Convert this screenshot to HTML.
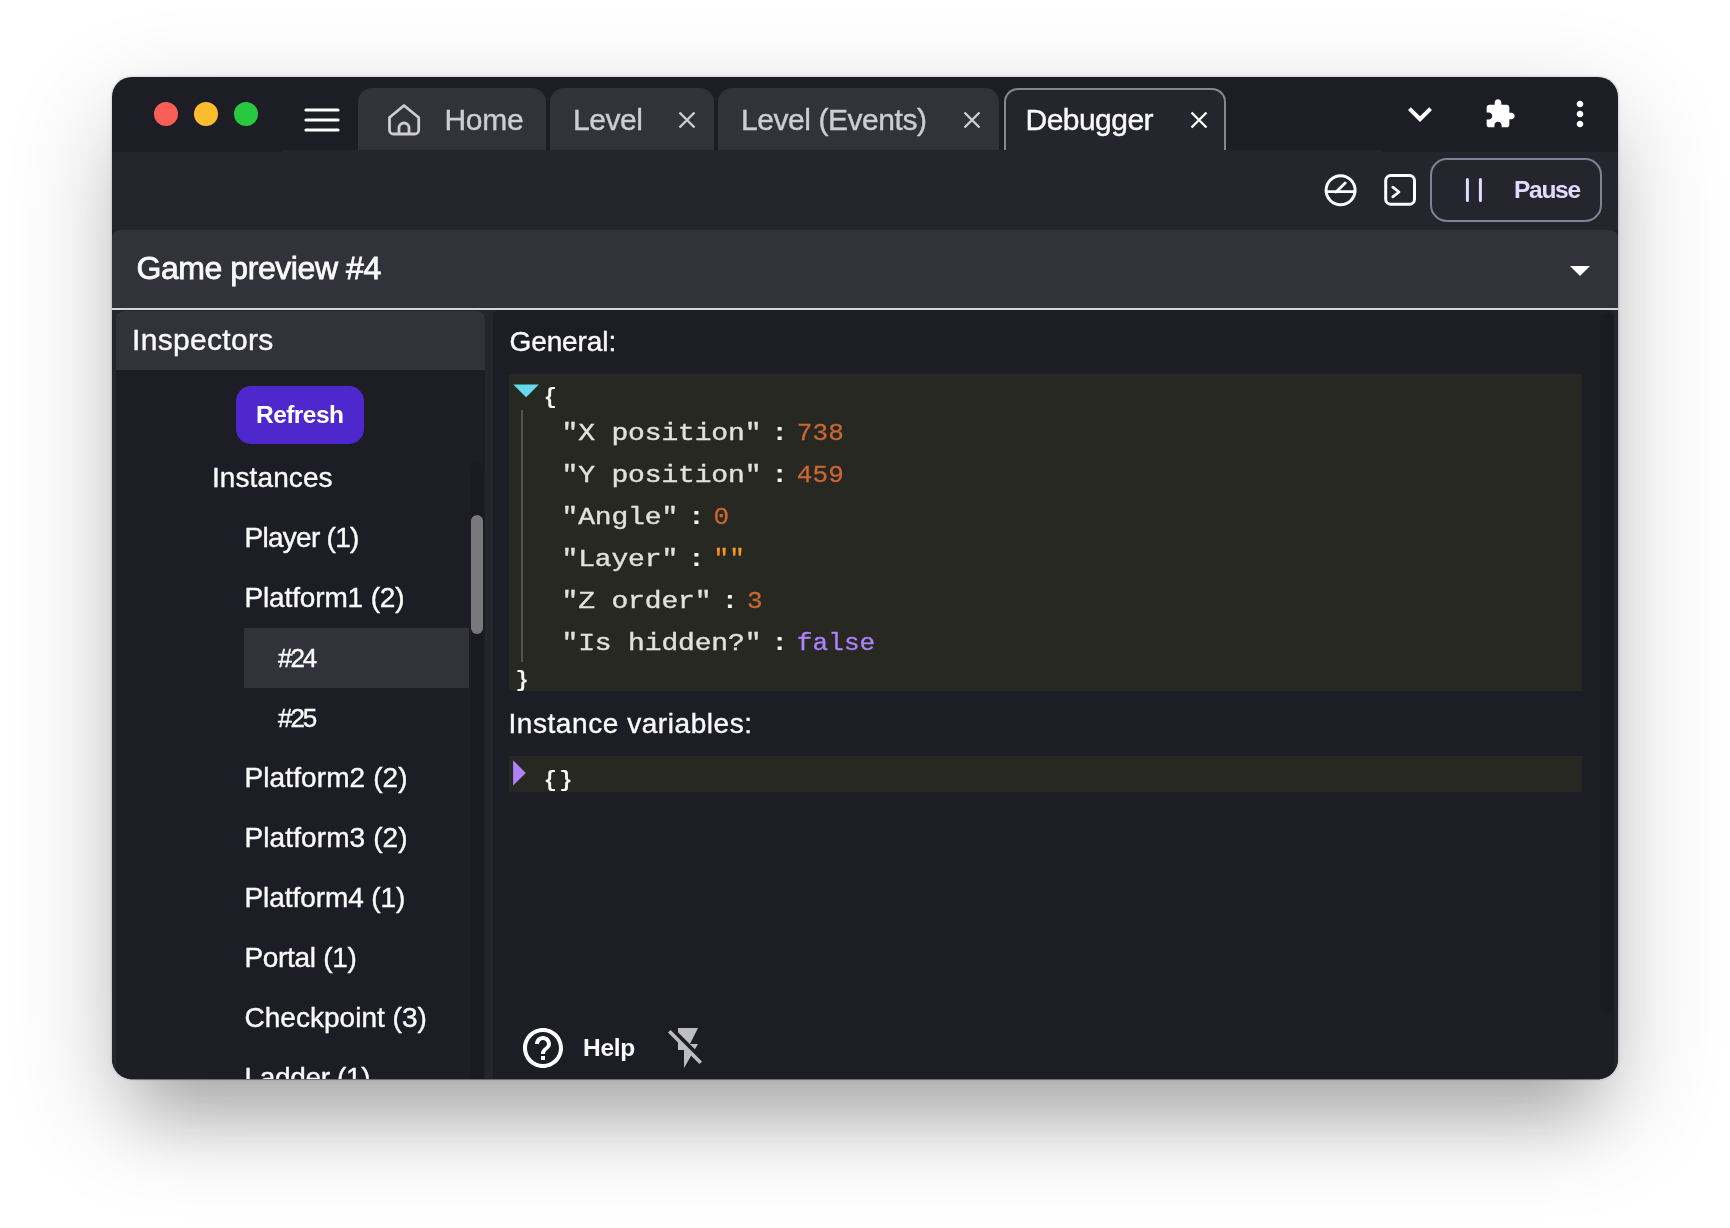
<!DOCTYPE html>
<html lang="en"><head><meta charset="utf-8"><title>GDevelop Debugger</title>
<style>
html,body{margin:0;padding:0}
body{width:1730px;height:1228px;background:#fff;position:relative;overflow:hidden}
.shadow{position:absolute;left:112px;top:77px;width:1506px;height:1002px;border-radius:20px;background:#1d1d26;box-shadow:0 36px 104px rgba(0,0,0,.22),0 64px 64px -30px rgba(0,0,0,.19),0 0 3px rgba(0,0,0,.25)}
.clip{will-change:transform;position:absolute;left:0;top:0;width:1730px;height:1228px;clip-path:inset(77px 112px 149px 112px round 20px)}
.a{position:absolute}
.t{position:absolute;white-space:pre}
.m{position:absolute;white-space:pre;font:400 28px/1 "Liberation Mono",monospace;transform-origin:0 76%}
.k{-webkit-text-stroke:.45px #e2e2dc;color:#e2e2dc;transform:scaleY(.84);letter-spacing:-.15px}
.c{color:#f4f4ee;transform:scaleY(.84);font-weight:700}
.v{-webkit-text-stroke:.3px;font-size:26px;letter-spacing:.1px;transform:scaleY(.93)}
.n{color:#cc6633}
.s{color:#fd971f}
.b{color:#ae81ff}
.br{font-weight:700;font-size:22px;color:#f9f8f5}
.tab{position:absolute;top:88px;height:62px;background:#32323b;border-radius:14px 14px 0 0}
.dot{position:absolute;top:102px;width:24px;height:24px;border-radius:50%}
svg{position:absolute;overflow:visible}

</style></head>
<body>
<div class="shadow"></div>
<div class="a" style="left:130px;top:1079px;width:1470px;height:1px;background:rgba(29,29,38,.4)"></div>
<div class="clip">
<!-- toolbar + tab strip -->
<div class="a" style="left:112px;top:152px;width:1506px;height:78px;background:#25252e"></div>
<div class="a" style="left:282px;top:150px;width:1100px;height:2px;background:#25252e"></div>
<!-- traffic lights -->
<div class="dot" style="left:154px;background:#fa5f57"></div>
<div class="dot" style="left:194px;background:#fdbc2e"></div>
<div class="dot" style="left:234px;background:#28c840"></div>
<!-- hamburger -->
<svg style="left:300px;top:100px" width="44" height="40" viewBox="300 100 44 40"><path d="M306 110H338M306 120H338M306 130H338" stroke="#fff" stroke-width="3.2" stroke-linecap="round" fill="none"/></svg>
<!-- tabs -->
<div class="tab" style="left:358px;width:188px"></div>
<div class="tab" style="left:550px;width:164px"></div>
<div class="tab" style="left:718px;width:281px"></div>
<div class="tab" style="left:1004px;width:218px;height:60px;background:#25252e;border:2px solid #86868e;border-bottom:0"></div>
<!-- home icon -->
<svg style="left:384px;top:100px" width="40" height="40" viewBox="384 100 40 40"><path d="M389.5 117.5L404 105.5L418.7 117.5V130a4 4 0 0 1-4 4H393.5a4 4 0 0 1-4-4Z" stroke="#cdcdd2" stroke-width="2.8" stroke-linejoin="round" fill="none"/><path d="M399 133.5V128a5 5 0 0 1 10 0V133.5" stroke="#cdcdd2" stroke-width="2.8" fill="none"/></svg>
<!-- close X -->
<svg style="left:677px;top:110px" width="20" height="20" viewBox="0 0 20 20"><path d="M2.5 2.5L17.5 17.5M17.5 2.5L2.5 17.5" stroke="#cdcdd2" stroke-width="2.4" fill="none"/></svg>
<svg style="left:962.4px;top:110px" width="20" height="20" viewBox="0 0 20 20"><path d="M2.5 2.5L17.5 17.5M17.5 2.5L2.5 17.5" stroke="#cdcdd2" stroke-width="2.4" fill="none"/></svg>
<svg style="left:1189.2px;top:110px" width="20" height="20" viewBox="0 0 20 20"><path d="M2.5 2.5L17.5 17.5M17.5 2.5L2.5 17.5" stroke="#fafafa" stroke-width="2.4" fill="none"/></svg>
<!-- right icons -->
<svg style="left:1396px;top:90px" width="48" height="48" viewBox="0 0 24 24"><path d="M16.59 8.59L12 13.17 7.41 8.59 6 10l6 6 6-6z" fill="#fff"/></svg>
<svg style="left:1484.2px;top:97.8px" width="32" height="32" viewBox="0 0 24 24"><path d="M20.5 11H19V7c0-1.1-.9-2-2-2h-4V3.500C13 2.120 11.880 1 10.500 1S8 2.120 8 3.500V5H4c-1.100 0-1.990.9-1.990 2v3.800H3.500c1.490 0 2.700 1.210 2.700 2.700s-1.210 2.700-2.700 2.700H2V20c0 1.100.9 2 2 2h3.800v-1.500c0-1.490 1.210-2.700 2.700-2.700 1.490 0 2.700 1.210 2.700 2.700V22H17c1.100 0 2-.9 2-2v-4h1.500c1.380 0 2.500-1.120 2.500-2.500S21.880 11 20.500 11z" fill="#fff"/></svg>
<svg style="left:1560px;top:94px" width="40" height="40" viewBox="0 0 24 24"><path d="M12 8c1.100 0 2-.9 2-2s-.9-2-2-2-2 .9-2 2 .9 2 2 2zm0 2c-1.100 0-2 .9-2 2s.9 2 2 2 2-.9 2-2-.9-2-2-2zm0 6c-1.100 0-2 .9-2 2s.9 2 2 2 2-.9 2-2-.9-2-2-2z" fill="#fff"/></svg>
<!-- toolbar icons -->
<svg style="left:1320px;top:170px" width="42" height="42" viewBox="1320 170 42 42"><circle cx="1340.6" cy="190.2" r="14.5" stroke="#fff" stroke-width="3" fill="none"/><path d="M1326.5 191.6H1354.7M1336 192L1345.2 183" stroke="#fff" stroke-width="2.8" fill="none" stroke-linecap="round"/></svg>
<svg style="left:1380px;top:170px" width="42" height="42" viewBox="1380 170 42 42"><rect x="1385.7" y="175.5" width="28.8" height="28.7" rx="5" stroke="#fff" stroke-width="3" fill="none"/><path d="M1392.8 187.2L1399 192L1392.8 196.8" stroke="#fff" stroke-width="2.8" fill="none" stroke-linecap="round" stroke-linejoin="round"/></svg>
<div class="a" style="left:1430px;top:158.3px;width:168px;height:59.3px;border:2px solid #84809a;border-radius:17px"></div>
<svg style="left:1460px;top:172px" width="30" height="36" viewBox="1460 172 30 36"><path d="M1467.4 179.5V200.5M1480.4 179.5V200.5" stroke="#e4daff" stroke-width="3" stroke-linecap="round" fill="none"/></svg>
<!-- game preview header -->
<div class="a" style="left:112px;top:230px;width:1506px;height:78px;background:#32323b;border-radius:8px 8px 0 0"></div>
<div class="a" style="left:112px;top:308px;width:1506px;height:2px;background:#d6d6da"></div>
<svg style="left:1556px;top:246px" width="48" height="48" viewBox="0 0 24 24"><path d="M7 10l5 5 5-5z" fill="#fff"/></svg>
<!-- body -->
<div class="a" style="left:112px;top:310px;width:1506px;height:780px;background:#25252e"></div>
<div class="a" style="left:116px;top:310.5px;width:369px;height:780px;background:#1d1d26;border-radius:8px 8px 0 0"></div>
<div class="a" style="left:116px;top:310.5px;width:369px;height:59.7px;background:#32323b;border-radius:8px 8px 0 0"></div>
<div class="a" style="left:493.4px;top:310px;width:1120.6px;height:780px;background:#1d1d26;border-radius:6px 6px 0 0"></div>
<div class="a" style="left:1600px;top:314px;width:14px;height:698px;background:rgba(0,0,0,.07);border-radius:6px"></div>
<!-- left panel -->
<div class="a" style="left:236px;top:386px;width:128px;height:58px;background:#4f28cd;border-radius:15px"></div>
<div class="a" style="left:471px;top:462px;width:12px;height:640px;background:rgba(0,0,0,.1);border-radius:6px 6px 0 0"></div>
<div class="a" style="left:244px;top:628px;width:225px;height:60px;background:#32323b"></div>
<div class="a" style="left:471px;top:515px;width:12px;height:119px;background:#79797d;border-radius:6px"></div>
<!-- json boxes -->
<div class="a" style="left:509px;top:374px;width:1073px;height:317.4px;background:#272822"></div>
<div class="a" style="left:509px;top:756px;width:1073px;height:35.5px;background:#272822"></div>
<svg style="left:509px;top:380px" width="40" height="24" viewBox="509 380 40 24"><path d="M513.3 384.4H538.9L526.1 397.3Z" fill="#66d9ef"/></svg>
<svg style="left:509px;top:756px" width="24" height="34" viewBox="509 756 24 34"><path d="M513.1 760.3V785.5L525.8 772.9Z" fill="#ae81ff"/></svg>
<div class="a" style="left:521px;top:410px;width:2px;height:251.5px;background:#55544a"></div>
<div class="m br" id="b_open" style="left:543.8px;top:387px">{</div>
<div class="m br" id="b_close" style="left:515.6px;top:669.6px">}</div>
<div class="m br" id="b_empty" style="left:543.8px;top:770px;letter-spacing:2.2px">{}</div>
<div class="m k" id="k0" style="left:561.5px;top:418.72px">&quot;X position&quot;</div>
<div class="m c" id="c0" style="left:771.3px;top:418.72px">:</div>
<div class="m v n" id="v0" style="left:796.8px;top:420.24px">738</div>
<div class="m k" id="k1" style="left:561.5px;top:460.72px">&quot;Y position&quot;</div>
<div class="m c" id="c1" style="left:771.3px;top:460.72px">:</div>
<div class="m v n" id="v1" style="left:796.8px;top:462.24px">459</div>
<div class="m k" id="k2" style="left:561.5px;top:502.72px">&quot;Angle&quot;</div>
<div class="m c" id="c2" style="left:688.0px;top:502.72px">:</div>
<div class="m v n" id="v2" style="left:713.5px;top:504.24px">0</div>
<div class="m k" id="k3" style="left:561.5px;top:544.72px">&quot;Layer&quot;</div>
<div class="m c" id="c3" style="left:688.0px;top:544.72px">:</div>
<div class="m v s" id="v3" style="left:713.5px;top:546.24px">&quot;&quot;</div>
<div class="m k" id="k4" style="left:561.5px;top:586.72px">&quot;Z order&quot;</div>
<div class="m c" id="c4" style="left:721.4px;top:586.72px">:</div>
<div class="m v n" id="v4" style="left:746.9px;top:588.24px">3</div>
<div class="m k" id="k5" style="left:561.5px;top:628.72px">&quot;Is hidden?&quot;</div>
<div class="m c" id="c5" style="left:771.3px;top:628.72px">:</div>
<div class="m v b" id="v5" style="left:796.8px;top:630.24px">false</div>
<!-- help -->
<svg style="left:519px;top:1024px" width="48" height="48" viewBox="0 0 24 24"><path d="M11 18h2v-2h-2v2zm1-16C6.480 2 2 6.480 2 12s4.480 10 10 10 10-4.480 10-10S17.520 2 12 2zm0 18c-4.410 0-8-3.590-8-8s3.590-8 8-8 8 3.590 8 8-3.590 8-8 8zm0-14c-2.210 0-4 1.790-4 4h2c0-1.100.9-2 2-2s2 .9 2 2c0 2-3 1.750-3 5h2c0-2.250 3-2.500 3-5 0-2.210-1.790-4-4-4z" fill="#fff"/></svg>
<svg style="left:664px;top:1024px" width="48" height="48" viewBox="0 0 24 24"><path d="M3.270 3L2 4.270l5 5V13h3v9l3.580-6.140L17.730 20 19 18.730 3.270 3zM17 10h-4l4-8H7v2.180l8.460 8.460L17 10z" fill="#bdbdc3"/></svg>
<div class="t" id="t_home" style="left:444.50px;top:104.60px;font:400 30px/1 'Liberation Sans', sans-serif;color:#cdcdd2;letter-spacing:-0.300px;-webkit-text-stroke:0.4px #cdcdd2;">Home</div>
<div class="t" id="t_level" style="left:573.00px;top:104.60px;font:400 30px/1 'Liberation Sans', sans-serif;color:#cdcdd2;letter-spacing:-0.425px;-webkit-text-stroke:0.4px #cdcdd2;">Level</div>
<div class="t" id="t_events" style="left:741.00px;top:104.60px;font:400 30px/1 'Liberation Sans', sans-serif;color:#cdcdd2;letter-spacing:-0.438px;-webkit-text-stroke:0.4px #cdcdd2;">Level (Events)</div>
<div class="t" id="t_debug" style="left:1025.50px;top:104.60px;font:400 30px/1 'Liberation Sans', sans-serif;color:#fafafa;letter-spacing:-0.529px;-webkit-text-stroke:0.4px #fafafa;">Debugger</div>
<div class="t" id="t_pause" style="left:1514.00px;top:178.47px;font:700 24.5px/1 'Liberation Sans', sans-serif;color:#e4daff;letter-spacing:-1.275px;">Pause</div>
<div class="t" id="t_game" style="left:136.50px;top:252.20px;font:400 32px/1 'Liberation Sans', sans-serif;color:#fafafa;letter-spacing:-0.436px;-webkit-text-stroke:0.8px #fafafa;">Game preview #4</div>
<div class="t" id="t_insp" style="left:132.00px;top:325.20px;font:400 30px/1 'Liberation Sans', sans-serif;color:#fafafa;letter-spacing:0.322px;-webkit-text-stroke:0.4px #fafafa;">Inspectors</div>
<div class="t" id="t_refresh" style="left:256.00px;top:402.77px;font:700 24.5px/1 'Liberation Sans', sans-serif;color:#ffffff;letter-spacing:-0.550px;">Refresh</div>
<div class="t" id="t_inst" style="left:212.00px;top:463.80px;font:400 28px/1 'Liberation Sans', sans-serif;color:#fafafa;letter-spacing:0.088px;-webkit-text-stroke:0.4px #fafafa;">Instances</div>
<div class="t" id="t_row0" style="left:244.50px;top:524.20px;font:400 28px/1 'Liberation Sans', sans-serif;color:#fafafa;letter-spacing:-0.722px;-webkit-text-stroke:0.4px #fafafa;">Player (1)</div>
<div class="t" id="t_row1" style="left:244.50px;top:584.20px;font:400 28px/1 'Liberation Sans', sans-serif;color:#fafafa;letter-spacing:-0.142px;-webkit-text-stroke:0.4px #fafafa;">Platform1 (2)</div>
<div class="t" id="t_row2" style="left:278.00px;top:644.90px;font:400 26px/1 'Liberation Sans', sans-serif;color:#fafafa;letter-spacing:-2.050px;-webkit-text-stroke:0.4px #fafafa;">#24</div>
<div class="t" id="t_row3" style="left:278.00px;top:704.90px;font:400 26px/1 'Liberation Sans', sans-serif;color:#fafafa;letter-spacing:-2.050px;-webkit-text-stroke:0.4px #fafafa;">#25</div>
<div class="t" id="t_row4" style="left:244.50px;top:764.20px;font:400 28px/1 'Liberation Sans', sans-serif;color:#fafafa;letter-spacing:0.108px;-webkit-text-stroke:0.4px #fafafa;">Platform2 (2)</div>
<div class="t" id="t_row5" style="left:244.50px;top:824.20px;font:400 28px/1 'Liberation Sans', sans-serif;color:#fafafa;letter-spacing:0.108px;-webkit-text-stroke:0.4px #fafafa;">Platform3 (2)</div>
<div class="t" id="t_row6" style="left:244.50px;top:884.20px;font:400 28px/1 'Liberation Sans', sans-serif;color:#fafafa;letter-spacing:-0.075px;-webkit-text-stroke:0.4px #fafafa;">Platform4 (1)</div>
<div class="t" id="t_row7" style="left:244.50px;top:944.20px;font:400 28px/1 'Liberation Sans', sans-serif;color:#fafafa;letter-spacing:-0.322px;-webkit-text-stroke:0.4px #fafafa;">Portal (1)</div>
<div class="t" id="t_row8" style="left:244.50px;top:1004.20px;font:400 28px/1 'Liberation Sans', sans-serif;color:#fafafa;letter-spacing:0.023px;-webkit-text-stroke:0.4px #fafafa;">Checkpoint (3)</div>
<div class="t" id="t_row9" style="left:244.50px;top:1064.20px;font:400 28px/1 'Liberation Sans', sans-serif;color:#fafafa;letter-spacing:-0.344px;-webkit-text-stroke:0.4px #fafafa;">Ladder (1)</div>
<div class="t" id="t_general" style="left:509.50px;top:327.80px;font:400 28px/1 'Liberation Sans', sans-serif;color:#fafafa;letter-spacing:-0.100px;-webkit-text-stroke:0.4px #fafafa;">General:</div>
<div class="t" id="t_ivars" style="left:508.50px;top:710.20px;font:400 28px/1 'Liberation Sans', sans-serif;color:#fafafa;letter-spacing:0.561px;-webkit-text-stroke:0.4px #fafafa;">Instance variables:</div>
<div class="t" id="t_help" style="left:583.00px;top:1035.88px;font:700 24.5px/1 'Liberation Sans', sans-serif;color:#fafafa;letter-spacing:-0.300px;">Help</div>
</div>

</body></html>
